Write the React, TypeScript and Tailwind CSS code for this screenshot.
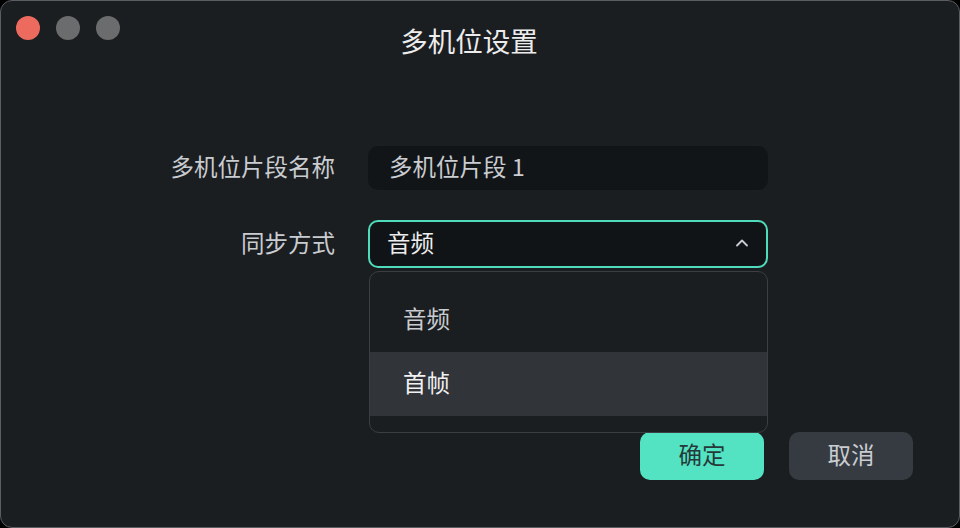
import * as React from "react";
import { ChevronUp } from "lucide-react";

const FONT = '"Noto Sans CJK SC", "Noto Sans", sans-serif';

const OPTIONS = ["音频", "首帧"];

export default function App() {
  const [hovered] = React.useState(1);

  return (
    <div className="h-[528px] w-[960px] bg-black" style={{ fontFamily: FONT }}>
      <div className="relative flex h-full w-full flex-col rounded-[12px] border border-[#5a5d61] bg-[#1b1e21]">
        {/* Title bar */}
        <div className="relative flex h-[80px] items-start justify-center pr-[22px] pt-[19px]">
          <div className="absolute left-[15px] top-[15px] flex gap-[16px]">
            <span className="h-[24px] w-[24px] rounded-full bg-[#ed6a5e]" />
            <span className="h-[24px] w-[24px] rounded-full bg-[#6b6c6d]" />
            <span className="h-[24px] w-[24px] rounded-full bg-[#6b6c6d]" />
          </div>
          <h1 className="text-[27.5px] leading-[40px] text-[#ececec]">多机位设置</h1>
        </div>

        {/* Form */}
        <div className="mt-[65px] grid grid-cols-[199px_400px] gap-x-[33px] gap-y-[30px] pl-[135px]">
          <div className="flex h-[44px] items-center justify-end pb-[2px] text-[23.5px] text-[#c9ccd0]">
            多机位片段名称
          </div>
          <div className="flex h-[44px] items-center rounded-[10px] bg-[#121518] pb-[2px] pl-[21px] text-[23.5px] text-[#c9ccd0]">
            多机位片段 1
          </div>

          <div className="flex h-[48px] items-center justify-end pb-[2px] text-[23.5px] text-[#c9ccd0]">
            同步方式
          </div>
          <div className="relative">
            <div className="flex h-[48px] items-center justify-between rounded-[10px] border-2 border-[#50dcbc] bg-[#111417] pb-[2px] pl-[17px] pr-[14px] text-[23.5px] text-[#eeeeee]">
              <span>音频</span>
              <ChevronUp className="h-[20px] w-[20px] text-[#c9ccd0]" strokeWidth={2.2} />
            </div>

            {/* Dropdown menu */}
            <div className="absolute left-[1px] top-[51px] z-10 w-[399px] overflow-hidden rounded-[10px] border border-[#3b3e43] bg-[#1b1e21] py-[16px]">
              {OPTIONS.map((opt, i) => (
                <div
                  key={opt}
                  className={
                    "flex h-[64px] items-center pb-[2px] pl-[33px] text-[23.5px] " +
                    (i === hovered ? "bg-[#31353a] text-[#f0f0f0]" : "text-[#c9ccd0]")
                  }
                >
                  {opt}
                </div>
              ))}
            </div>
          </div>
        </div>

        {/* Actions */}
        <div className="absolute bottom-[47px] right-[46px] flex gap-[25px]">
          <button className="h-[48px] w-[124px] rounded-[10px] bg-[#53e3c3] pb-[2px] text-[23.5px] text-[#26393a]">
            确定
          </button>
          <button className="h-[48px] w-[124px] rounded-[10px] bg-[#363b42] pb-[2px] text-[23.5px] text-[#c9ccd0]">
            取消
          </button>
        </div>
      </div>
    </div>
  );
}
